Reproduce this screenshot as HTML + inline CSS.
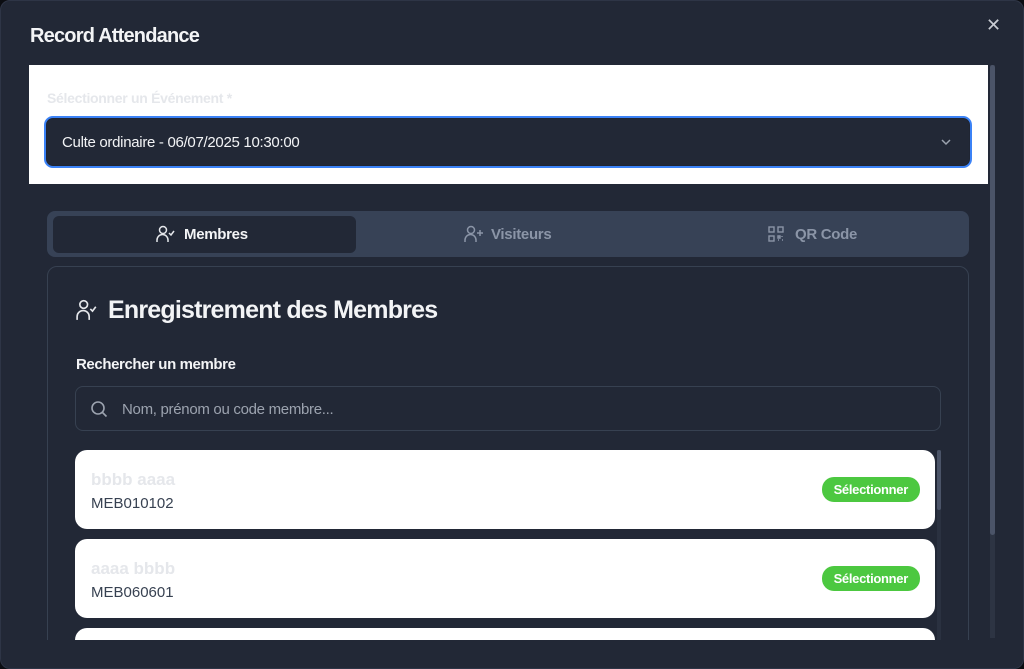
<!DOCTYPE html>
<html><head><meta charset="utf-8"><style>
*{box-sizing:border-box;margin:0;padding:0}
html,body{width:1024px;height:669px;overflow:hidden}
body{background:#0b0d12;font-family:"Liberation Sans",sans-serif;position:relative}
.modal{position:absolute;left:0;top:0;width:1024px;height:669px;background:#222836;border-radius:10px;border:1px solid #2e3546}
.abs{position:absolute}
.title{left:30px;top:25px;color:#f3f4f6;font-size:20px;font-weight:bold;letter-spacing:-0.8px}
.close{left:986px;top:15px;color:#c9ccd3;font-size:18px}
.white{left:29px;top:65px;width:959px;height:119px;background:#fff}
.lbl{left:47px;top:90px;color:#e5e7eb;font-size:14px;font-weight:bold;letter-spacing:-0.3px}
.sel{left:44px;top:116px;width:928px;height:52px;border:2px solid #3b82f6;border-radius:9px;background:#222836;box-shadow:inset 0 0 0 1px #1f2533}
.sel span{position:absolute;left:16px;top:16px;color:#f3f4f6;font-size:15px;letter-spacing:-0.3px}
.tabs{left:47px;top:211px;width:922px;height:46px;background:#374256;border-radius:8px}
.tab1{left:53px;top:216px;width:303px;height:37px;background:#222836;border-radius:6px}
.t{position:absolute;top:226px;font-size:15px;font-weight:bold;letter-spacing:-0.3px}
.card{left:47px;top:266px;width:922px;height:400px;border:1px solid #374151;border-radius:10px}
.h{left:108px;top:296px;color:#f3f4f6;font-size:25px;font-weight:bold;letter-spacing:-0.8px}
.sl{left:76px;top:356px;color:#f3f4f6;font-size:15px;font-weight:bold;letter-spacing:-0.4px}
.search{left:75px;top:386px;width:866px;height:45px;border:1px solid #374151;border-radius:8px}
.search span{position:absolute;left:46px;top:14px;color:#9ca3af;font-size:15px;letter-spacing:-0.3px}
.m{left:75px;width:860px;height:79px;background:#fff;border-radius:12px}
.m .n{position:absolute;left:16px;top:20px;color:#e5e7eb;font-size:17px;font-weight:bold}
.m .c{position:absolute;left:16px;top:45px;color:#374151;font-size:15px}
.m .b{position:absolute;right:15px;top:27px;background:#4cc840;color:#fff;font-size:13px;font-weight:bold;padding:5px 12px;border-radius:12px;letter-spacing:-0.3px}
.sb{left:990px;top:65px;width:5px;height:573px;background:#2d3443}
.sbt{left:990px;top:65px;width:5px;height:470px;background:#4b5468;border-radius:3px}
.isb{left:937px;top:450px;width:4px;height:190px;background:#2a3140}
.isbt{left:937px;top:450px;width:4px;height:60px;background:#4b5468;border-radius:2px}
.cover{left:1px;top:640px;width:1022px;height:28px;background:#222836;border-radius:0 0 10px 10px}
</style></head><body>
<div class="modal"></div>
<div class="abs title">Record Attendance</div>
<div class="abs close">✕</div>
<div class="abs white"></div>
<div class="abs lbl">Sélectionner un Événement *</div>
<div class="abs sel"><span>Culte ordinaire - 06/07/2025 10:30:00</span>
<svg style="position:absolute;right:18px;top:18px" width="12" height="12" viewBox="0 0 12 12"><path d="M2 4l4 4 4-4" stroke="#9ca3af" stroke-width="1.5" fill="none"/></svg></div>
<div class="abs tabs"></div>
<div class="abs tab1"></div>
<svg class="abs" style="left:156px;top:225px" width="20" height="18" viewBox="0 0 20 18" fill="none" stroke="#e5e7eb" stroke-width="1.5"><circle cx="7" cy="5" r="3.5"/><path d="M1 17v-2a5 5 0 0 1 11 0v2"/><path d="M13 8l2 2 3-4"/></svg>
<div class="t" style="left:184px;color:#f3f4f6">Membres</div>
<svg class="abs" style="left:464px;top:225px" width="20" height="18" viewBox="0 0 20 18" fill="none" stroke="#8b95a7" stroke-width="1.5"><circle cx="7" cy="5" r="3.5"/><path d="M1 17v-2a5 5 0 0 1 11 0v2"/><path d="M16 5v6M13 8h6"/></svg>
<div class="t" style="left:491px;color:#8b95a7">Visiteurs</div>
<svg class="abs" style="left:768px;top:226px" width="16" height="16" viewBox="0 0 16 16" fill="none" stroke="#8b95a7" stroke-width="1.4"><rect x="1" y="1" width="5" height="5"/><rect x="10" y="1" width="5" height="5"/><rect x="1" y="10" width="5" height="5"/><path d="M10 10h2v2h-2zM14 14h1M14 10v1M10 14h1"/></svg>
<div class="t" style="left:795px;color:#8b95a7">QR Code</div>
<div class="abs card"></div>
<svg class="abs" style="left:76px;top:299px" width="22" height="22" viewBox="0 0 20 20" fill="none" stroke="#e5e7eb" stroke-width="1.5"><circle cx="7" cy="5" r="3.5"/><path d="M1 19v-3a5 5 0 0 1 11 0v3"/><path d="M13 9l2 2 3-4"/></svg>
<div class="abs h">Enregistrement des Membres</div>
<div class="abs sl">Rechercher un membre</div>
<div class="abs search"><svg style="position:absolute;left:14px;top:13px" width="18" height="18" viewBox="0 0 18 18" fill="none" stroke="#9ca3af" stroke-width="1.6"><circle cx="8" cy="8" r="6"/><path d="M12.5 12.5l4 4"/></svg><span>Nom, prénom ou code membre...</span></div>
<div class="abs m" style="top:450px"><div class="n">bbbb aaaa</div><div class="c">MEB010102</div><div class="b">Sélectionner</div></div>
<div class="abs m" style="top:539px"><div class="n">aaaa bbbb</div><div class="c">MEB060601</div><div class="b">Sélectionner</div></div>
<div class="abs m" style="top:628px;height:12px;border-radius:12px 12px 0 0"></div>
<div class="abs isb"></div><div class="abs isbt"></div>
<div class="abs cover"></div>
<div class="abs sb"></div><div class="abs sbt"></div>
</body></html>
